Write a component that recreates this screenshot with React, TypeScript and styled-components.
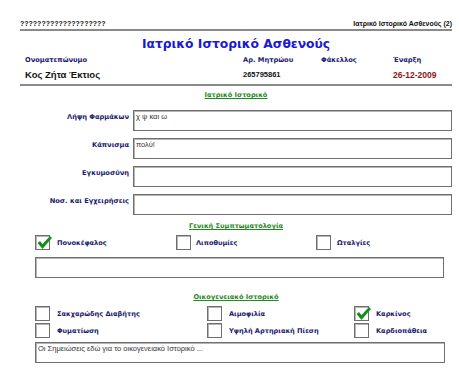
import React from "react";
import styled, { createGlobalStyle } from "styled-components";

const Global = createGlobalStyle`
  html, body { margin: 0; padding: 0; background: #fff; }
  body { font-family: "Liberation Sans", Arial, sans-serif; }
`;

const wide = `"DejaVu Sans", Verdana, sans-serif`;

const Page = styled.div`
  width: 459px;
  height: 372px;
  box-sizing: border-box;
  padding: 17px 7px 0 20px;
  overflow: hidden;
`;

const TopBar = styled.div`
  display: flex;
  justify-content: space-between;
  align-items: center;
  height: 12px;
  font-size: 7px;
  font-weight: bold;
  color: #111;
  border-bottom: 2px solid #8a8a8a;
`;

const Title = styled.div`
  margin-top: 4px;
  height: 18px;
  line-height: 18px;
  text-align: center;
  font-family: ${wide};
  font-size: 12.3px;
  font-weight: bold;
  color: #1818d8;
`;

const InfoGrid = styled.div`
  display: grid;
  grid-template-columns: 218px 78px 72px 1fr;
  padding: 2px 0 3px 5px;
  border-bottom: 2px solid #8a8a8a;
`;

const InfoLabel = styled.div`
  height: 10px;
  line-height: 10px;
  font-family: ${wide};
  font-size: 6.7px;
  font-weight: bold;
  color: #1a1a6e;
  margin-bottom: 4px;
`;

const InfoValue = styled.div<{ $size: number; $red?: boolean }>`
  height: 12px;
  line-height: 12px;
  font-size: ${(p) => p.$size}px;
  font-weight: bold;
  color: ${(p) => (p.$red ? "#8b1616" : "#111")};
`;

const SectionTitle = styled.div<{ $mt: number }>`
  margin-top: ${(p) => p.$mt}px;
  height: 10px;
  line-height: 10px;
  text-align: center;
  font-family: ${wide};
  font-size: 6.6px;
  font-weight: bold;
  color: #1f8a1f;
  text-decoration: underline;
`;

const FieldList = styled.div`
  margin-top: 10px;
  display: flex;
  flex-direction: column;
  gap: 7px;
`;

const FieldRow = styled.div`
  display: grid;
  grid-template-columns: 109px 1fr;
  column-gap: 4px;
`;

const FieldLabel = styled.div`
  text-align: right;
  font-family: ${wide};
  font-size: 6.7px;
  font-weight: bold;
  color: #1a1a6e;
  padding-top: 3px;
`;

const Box = styled.div<{ $mt?: number; $ml?: number; $mr?: number }>`
  height: 21px;
  box-sizing: border-box;
  margin-top: ${(p) => p.$mt ?? 0}px;
  margin-left: ${(p) => p.$ml ?? 0}px;
  margin-right: ${(p) => p.$mr ?? 0}px;
  border: 1px solid #6f6f6f;
  box-shadow: inset 1px 1px 0 #b5b5b5;
  padding: 1px 2px;
  font-size: 7.5px;
  color: #333;
  line-height: 9px;
  background: #fff;
`;

const CheckGrid = styled.div<{ $cols: string; $mt: number }>`
  display: grid;
  grid-template-columns: ${(p) => p.$cols};
  row-gap: 2px;
  margin-top: ${(p) => p.$mt}px;
  margin-left: 15px;
`;

const CheckItem = styled.div<{ $gap: number }>`
  display: flex;
  align-items: center;
  gap: ${(p) => p.$gap}px;
  height: 15px;
  font-family: ${wide};
  font-size: 6.6px;
  font-weight: bold;
  color: #1a1a6e;
`;

const CheckSquare = styled.div`
  width: 15px;
  height: 15px;
  box-sizing: border-box;
  border: 1px solid #6f6f6f;
  box-shadow: inset 1px 1px 0 #b5b5b5;
  background: #fff;
  position: relative;
  flex: none;
`;

const Tick = styled.svg`
  position: absolute;
  left: 0px;
  top: -2px;
`;

function Check({ label, checked, gap = 7 }: { label: string; checked?: boolean; gap?: number }) {
  return (
    <CheckItem $gap={gap}>
      <CheckSquare>
        {checked && (
          <Tick width="16" height="16" viewBox="0 0 16 16">
            <path d="M1.5 9 L4 7 L6.5 10 L14 2 L16 4 L6.5 15 Z" fill="#22962a" />
            <path d="M2.5 9.2 L4 8 L6.5 11 L14 3 L14.8 4 L6.5 13.5 Z" fill="#178a1f" />
          </Tick>
        )}
      </CheckSquare>
      <span>{label}</span>
    </CheckItem>
  );
}

const fields = [
  { label: "Λήψη Φαρμάκων", value: "χ ψ και ω" },
  { label: "Κάπνισμα", value: "πολύ!" },
  { label: "Εγκυμοσύνη", value: "" },
  { label: "Νοσ. και Εγχειρήσεις", value: "" },
];

export default function App() {
  return (
    <>
      <Global />
      <Page>
        <TopBar>
          <span>????????????????????</span>
          <span>Ιατρικό Ιστορικό Ασθενούς (2)</span>
        </TopBar>
        <Title>Ιατρικό Ιστορικό Ασθενούς</Title>
        <InfoGrid>
          <InfoLabel>Ονοματεπώνυμο</InfoLabel>
          <InfoLabel>Αρ. Μητρώου</InfoLabel>
          <InfoLabel>Φάκελλος</InfoLabel>
          <InfoLabel>Έναρξη</InfoLabel>
          <InfoValue $size={9.5}>Κος Ζήτα Έκτιος</InfoValue>
          <InfoValue $size={7.5}>265795861</InfoValue>
          <InfoValue $size={8}></InfoValue>
          <InfoValue $size={8.5} $red>26-12-2009</InfoValue>
        </InfoGrid>
        <SectionTitle $mt={4}>Ιατρικό Ιστορικό</SectionTitle>
        <FieldList>
          {fields.map((f) => (
            <FieldRow key={f.label}>
              <FieldLabel>{f.label}</FieldLabel>
              <Box>{f.value}</Box>
            </FieldRow>
          ))}
        </FieldList>
        <SectionTitle $mt={6}>Γενική Συμπτωματολογία</SectionTitle>
        <CheckGrid $cols="141px 140px 1fr" $mt={4}>
          <Check label="Πονοκέφαλος" checked gap={7} />
          <Check label="Λιποθυμίες" gap={5} />
          <Check label="Ωταλγίες" gap={6} />
        </CheckGrid>
        <Box $mt={7} $ml={15} $mr={8} />
        <SectionTitle $mt={14}>Οικογενειακό Ιστορικό</SectionTitle>
        <CheckGrid $cols="172px 147px 1fr" $mt={4}>
          <Check label="Σακχαρώδης Διαβήτης" />
          <Check label="Αιμοφιλία" />
          <Check label="Καρκίνος" checked />
          <Check label="Φυματίωση" />
          <Check label="Υψηλή Αρτηριακή Πίεση" />
          <Check label="Καρδιοπάθεια" />
        </CheckGrid>
        <Box $mt={4} $ml={15} $mr={7}>
          Οι Σημειώσεις εδώ για το οικογενειακό Ιστορικό ...
        </Box>
      </Page>
    </>
  );
}
